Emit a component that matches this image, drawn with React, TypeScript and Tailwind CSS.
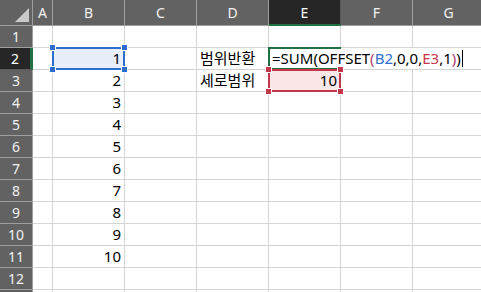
import React from 'react';

const cols = ['A', 'B', 'C', 'D', 'E', 'F', 'G'];
const rows = [1, 2, 3, 4, 5, 6, 7, 8, 9, 10, 11, 12, 13];

function Handle({ pos, color }: { pos: string; color: string }) {
  return <span className={`absolute w-[7px] h-[7px] border border-white ${color} ${pos} z-20`} />;
}

// formula in edit mode spills over F2 and G2 and hides the right edge of the active box
function Formula() {
  return (
    <div className="absolute left-[2px] top-[1px] bottom-[2px] pl-[1px] pr-[2px] flex items-center whitespace-nowrap z-30 bg-white text-[15px] text-black">
      <span>=SUM</span>
      <span>(</span>
      <span>OFFSET</span>
      <span className="text-[#b03a6e]">(</span>
      <span className="text-[#2f6fd0]">B2</span>
      <span>,0,0,</span>
      <span className="text-[#c8364b]">E3</span>
      <span>,1</span>
      <span className="text-[#b03a6e]">)</span>
      <span>)</span>
      <span className="ml-[1px] w-[1px] h-[17px] bg-black" />
    </div>
  );
}

function Cell({ r, c }: { r: number; c: string }) {
  const base = 'relative bg-white border-r border-b border-[#d4d4d4] text-[15px] text-black leading-none';
  const noRight = r === 2 && (c === 'F' || c === 'G') ? 'border-r-0' : '';

  if (c === 'B' && r === 2) {
    return (
      <div className={`${base} z-10`}>
        <div className="absolute left-[-1px] top-[-1px] right-[-1px] bottom-[-1px] border-2 border-[#2c6ccc] bg-[#e8eef9] flex items-center justify-end pr-[2px]">
          1
        </div>
        <Handle pos="left-[-4px] top-[-4px]" color="bg-[#2c6ccc]" />
        <Handle pos="right-[-4px] top-[-4px]" color="bg-[#2c6ccc]" />
        <Handle pos="left-[-4px] bottom-[-4px]" color="bg-[#2c6ccc]" />
        <Handle pos="right-[-4px] bottom-[-4px]" color="bg-[#2c6ccc]" />
      </div>
    );
  }
  if (c === 'E' && r === 2) {
    return (
      <div className={`${base} z-10`}>
        <div className="absolute left-[-1px] top-[-1px] right-[-1px] bottom-[-1px] border-2 border-[#1f7145]" />
        <Formula />
      </div>
    );
  }
  if (c === 'E' && r === 3) {
    return (
      <div className={`${base} z-10`}>
        <div className="absolute left-[-1px] top-[-1px] right-[-1px] bottom-[-1px] border-2 border-[#c4364a] bg-[#f9e7e8] flex items-center justify-end pr-[2px]">
          10
        </div>
        <Handle pos="left-[-4px] top-[-4px]" color="bg-[#c4364a]" />
        <Handle pos="right-[-4px] top-[-4px]" color="bg-[#c4364a]" />
        <Handle pos="left-[-4px] bottom-[-4px]" color="bg-[#c4364a]" />
        <Handle pos="right-[-4px] bottom-[-4px]" color="bg-[#c4364a]" />
      </div>
    );
  }
  let content: React.ReactNode = null;
  let align = 'justify-end pr-[3px]';
  if (c === 'B' && r >= 3 && r <= 11) content = r - 1;
  if (c === 'D' && r === 2) {
    content = '범위반환';
    align = 'justify-start pl-[3px]';
  }
  if (c === 'D' && r === 3) {
    content = '세로범위';
    align = 'justify-start pl-[3px]';
  }
  return <div className={`${base} ${noRight} flex items-center ${align}`}>{content}</div>;
}

export default function App() {
  return (
    <div
      className="w-[481px] h-[292px] overflow-hidden bg-white"
      style={{ fontFamily: '"Noto Sans", "Noto Sans CJK KR", sans-serif' }}
    >
      <div className="grid grid-cols-[33px_20px_72px_72px_72px_72px_72px_72px] grid-rows-[26px_repeat(13,22px)]">
        {/* corner */}
        <div className="relative bg-[#626262] border-r border-b border-[#9e9e9e]">
          <svg className="absolute right-[3px] bottom-[3px]" width="14" height="14" viewBox="0 0 14 14">
            <polygon points="14,0 14,14 0,14" fill="#c9c9c9" />
          </svg>
        </div>
        {cols.map((c) => (
          <div
            key={c}
            className={`flex items-center justify-center text-[14px] ${
              c === 'E'
                ? 'bg-[#262626] text-white border-b-2 border-b-[#1f7145] border-r border-r-[#5a5a5a]'
                : 'bg-[#626262] text-[#f2f2f2] border-r border-b border-[#9e9e9e]'
            }`}
          >
            {c}
          </div>
        ))}
        {rows.map((r) => (
          <React.Fragment key={r}>
            <div
              className={`flex items-center justify-center text-[14px] ${
                r === 2
                  ? 'bg-[#262626] text-white border-r-[3px] border-r-[#1f7145] border-b border-b-[#5a5a5a]'
                  : 'bg-[#626262] text-[#f2f2f2] border-r border-b border-[#9e9e9e]'
              }`}
            >
              {r < 13 ? r : null}
            </div>
            {cols.map((c) => (
              <Cell key={c} r={r} c={c} />
            ))}
          </React.Fragment>
        ))}
      </div>
    </div>
  );
}
